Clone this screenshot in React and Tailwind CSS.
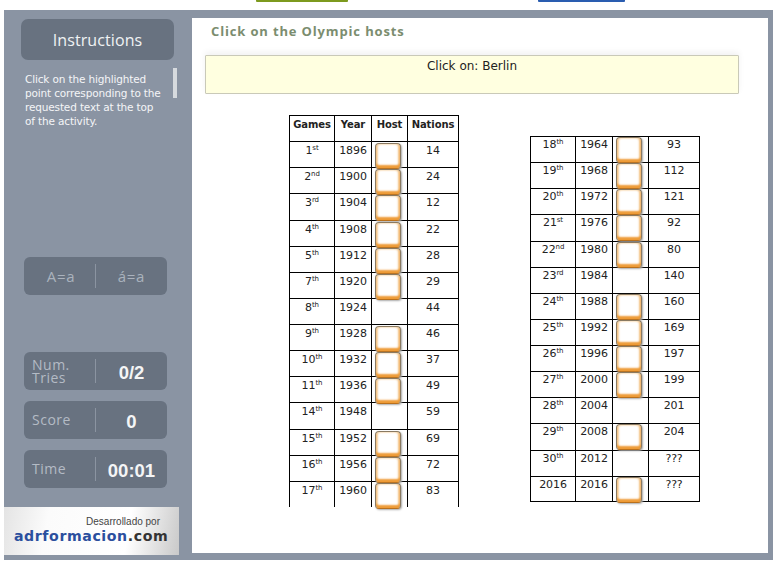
import React from "react";

const leftRows = [
  ["1", "st", "1896", true, "14"],
  ["2", "nd", "1900", true, "24"],
  ["3", "rd", "1904", true, "12"],
  ["4", "th", "1908", true, "22"],
  ["5", "th", "1912", true, "28"],
  ["7", "th", "1920", true, "29"],
  ["8", "th", "1924", false, "44"],
  ["9", "th", "1928", true, "46"],
  ["10", "th", "1932", true, "37"],
  ["11", "th", "1936", true, "49"],
  ["14", "th", "1948", false, "59"],
  ["15", "th", "1952", true, "69"],
  ["16", "th", "1956", true, "72"],
  ["17", "th", "1960", true, "83"],
];
const rightRows = [
  ["18", "th", "1964", true, "93"],
  ["19", "th", "1968", true, "112"],
  ["20", "th", "1972", true, "121"],
  ["21", "st", "1976", true, "92"],
  ["22", "nd", "1980", true, "80"],
  ["23", "rd", "1984", false, "140"],
  ["24", "th", "1988", true, "160"],
  ["25", "th", "1992", true, "169"],
  ["26", "th", "1996", true, "197"],
  ["27", "th", "2000", true, "199"],
  ["28", "th", "2004", false, "201"],
  ["29", "th", "2008", true, "204"],
  ["30", "th", "2012", false, "???"],
  ["2016", "", "2016", true, "???"],
];

function Hot({ right }) {
  return (
    <span
      className={
        "absolute w-[26px] h-[26px] z-10 rounded-[4px] bg-white border border-[#8a7a62] border-b-[#b9701c] shadow-[inset_0_-3px_2px_#ee9a35,inset_2px_0_2px_#f6d5a8,inset_-2px_0_2px_#f3c58a,1px_1px_2px_#aaa] " +
        (right ? "left-[3px] top-0" : "left-[3px] top-[1px]")
      }
    />
  );
}

function Cell({ children, last, bottom, right }) {
  return (
    <div
      className={
        "relative border-l border-t border-black text-center leading-[15px] " +
        (right ? "pt-0 " : "pt-[1px] ") +
        (last ? "border-r " : "") +
        (bottom ? "border-b " : "")
      }
    >
      {children}
    </div>
  );
}

function Rows({ rows, bottom, right }) {
  return rows.map((r, i) => {
    const b = bottom && i === rows.length - 1;
    return (
      <React.Fragment key={r[2]}>
        <Cell bottom={b} right={right}>
          {r[0]}
          {r[1] && <sup className="text-[7px] leading-none align-[4px] top-0">{r[1]}</sup>}
        </Cell>
        <Cell bottom={b} right={right}>{r[2]}</Cell>
        <Cell bottom={b} right={right}>{r[3] && <Hot right={right} />}</Cell>
        <Cell bottom={b} right={right} last>{r[4]}</Cell>
      </React.Fragment>
    );
  });
}

function Stat({ label, value, twoLine }) {
  return (
    <div className="flex items-center h-[38px] w-[143px] rounded-[6px] bg-[#687280] text-[#b4bbc5]">
      <div className={"w-[71px] pl-[8px] text-[14px] tracking-[0.5px] " + (twoLine ? "leading-[13px]" : "leading-[16px] -mt-[1px]")}>{label}</div>
      <div className="h-[24px] w-px bg-[#8b94a1]" />
      <div className="flex-1 mt-[4px] text-center text-[18.5px] font-bold text-[#f4f5f6] font-['Liberation_Sans',sans-serif]">{value}</div>
    </div>
  );
}

export default function App() {
  return (
    <div className="relative w-[776px] h-[561px] bg-white overflow-hidden font-['Open_Sans',sans-serif]">
      <div className="flex h-[2px] pl-[256px]">
        <div className="w-[92px] bg-[#7d9a1e] rounded-b-[1px]" />
        <div className="ml-[190px] w-[87px] bg-[#2a5db0] rounded-b-[1px]" />
      </div>
      <div className="mt-[8px] ml-[4px] w-[769px] h-[550px] bg-[#8a94a3] flex">
        {/* sidebar */}
        <aside className="w-[186px] shrink-0 flex flex-col relative">
          <div className="mt-[9px] ml-[17px] w-[153px] h-[41px] rounded-[7px] bg-[#687280] flex items-center justify-center text-[16px] tracking-[0.1px] text-[#f0f2f4]">
            Instructions
          </div>
          <div className="relative mt-[11px] ml-[21px] w-[137px] text-[10.5px] leading-[14px] text-[#f4f5f7] font-['DejaVu_Sans',sans-serif] tracking-[-0.15px] pt-[1px] h-[52px]">
            Click on the highlighted point corresponding to the requested text at the top of the activity.
            <span className="absolute left-[148px] -top-[3px] w-[4px] h-[30px] bg-[#d6dade]" />
          </div>
          <div className="mt-[134px] ml-[20px] flex items-center h-[38px] w-[143px] rounded-[6px] bg-[#687280] text-[#aab2bd] text-[15px] tracking-[0.7px]">
            <div className="w-[71px] text-center pl-[3px]">A=a</div>
            <div className="h-[24px] w-px bg-[#8b94a1]" />
            <div className="flex-1 text-center">á=a</div>
          </div>
          <div className="mt-[57px] ml-[20px] flex flex-col gap-[11px]">
            <Stat label="Num. Tries" value="0/2" twoLine />
            <Stat label="Score" value="0" />
            <Stat label="Time" value="00:01" />
          </div>
          <div className="mt-[19px] w-[175px] h-[48px] bg-[linear-gradient(100deg,#e4e4e4_0%,#fbfbfb_25%,#ffffff_70%,#c9c9c9_100%)] text-right relative">
            <div className="pt-[9px] pr-[19px] text-[10px] leading-[11px] text-[#444] font-['Liberation_Sans',sans-serif]">Desarrollado por</div>
            <div className="mt-[1px] pr-[11px] text-[14.5px] leading-[17px] font-black tracking-[0.6px] text-[#2b4f9e] font-['DejaVu_Sans',sans-serif] whitespace-nowrap scale-x-[0.975] origin-right">
              adrformacion<span className="text-[#333]">.com</span>
            </div>
          </div>
        </aside>
        {/* main */}
        <main className="mt-[8px] ml-[2px] w-[576px] h-[535px] bg-white relative">
          <h1 className="pl-[19px] pt-[5px] text-[13px] leading-[16px] font-bold tracking-[0.85px] text-[#7b8d6f]">Click on the Olympic hosts</h1>
          <div className="mt-[16px] ml-[13px] w-[534px] h-[39px] bg-[#ffffe0] border border-[#c9c9b8] rounded-[1px] shadow-[0_-3px_6px_#f2f2f2] text-center text-[12px] leading-[18px] pt-[1px] text-[#222] font-['DejaVu_Sans',sans-serif] tracking-[0px]">
            Click on: Berlin
          </div>
          <div className="flex items-start text-[11px] text-[#222] font-['DejaVu_Sans',sans-serif] tracking-[-0.1px]">
            <div className="mt-[21px] ml-[97px] w-[170px] grid grid-cols-[45px_37px_36px_52px] auto-rows-[26.13px]">
              {["Games", "Year", "Host", "Nations"].map((h, i) => (
                <div key={h} className={"border-l border-t border-black pt-[1px] text-center leading-[15px] font-bold text-[10px] " + (i === 3 ? "border-r" : "")}>{h}</div>
              ))}
              <Rows rows={leftRows} />
            </div>
            <div className="mt-[42px] ml-[71px] w-[170px] grid grid-cols-[45px_37px_36px_52px] auto-rows-[26.14px]">
              <Rows rows={rightRows} bottom right />
            </div>
          </div>
        </main>
      </div>
    </div>
  );
}
